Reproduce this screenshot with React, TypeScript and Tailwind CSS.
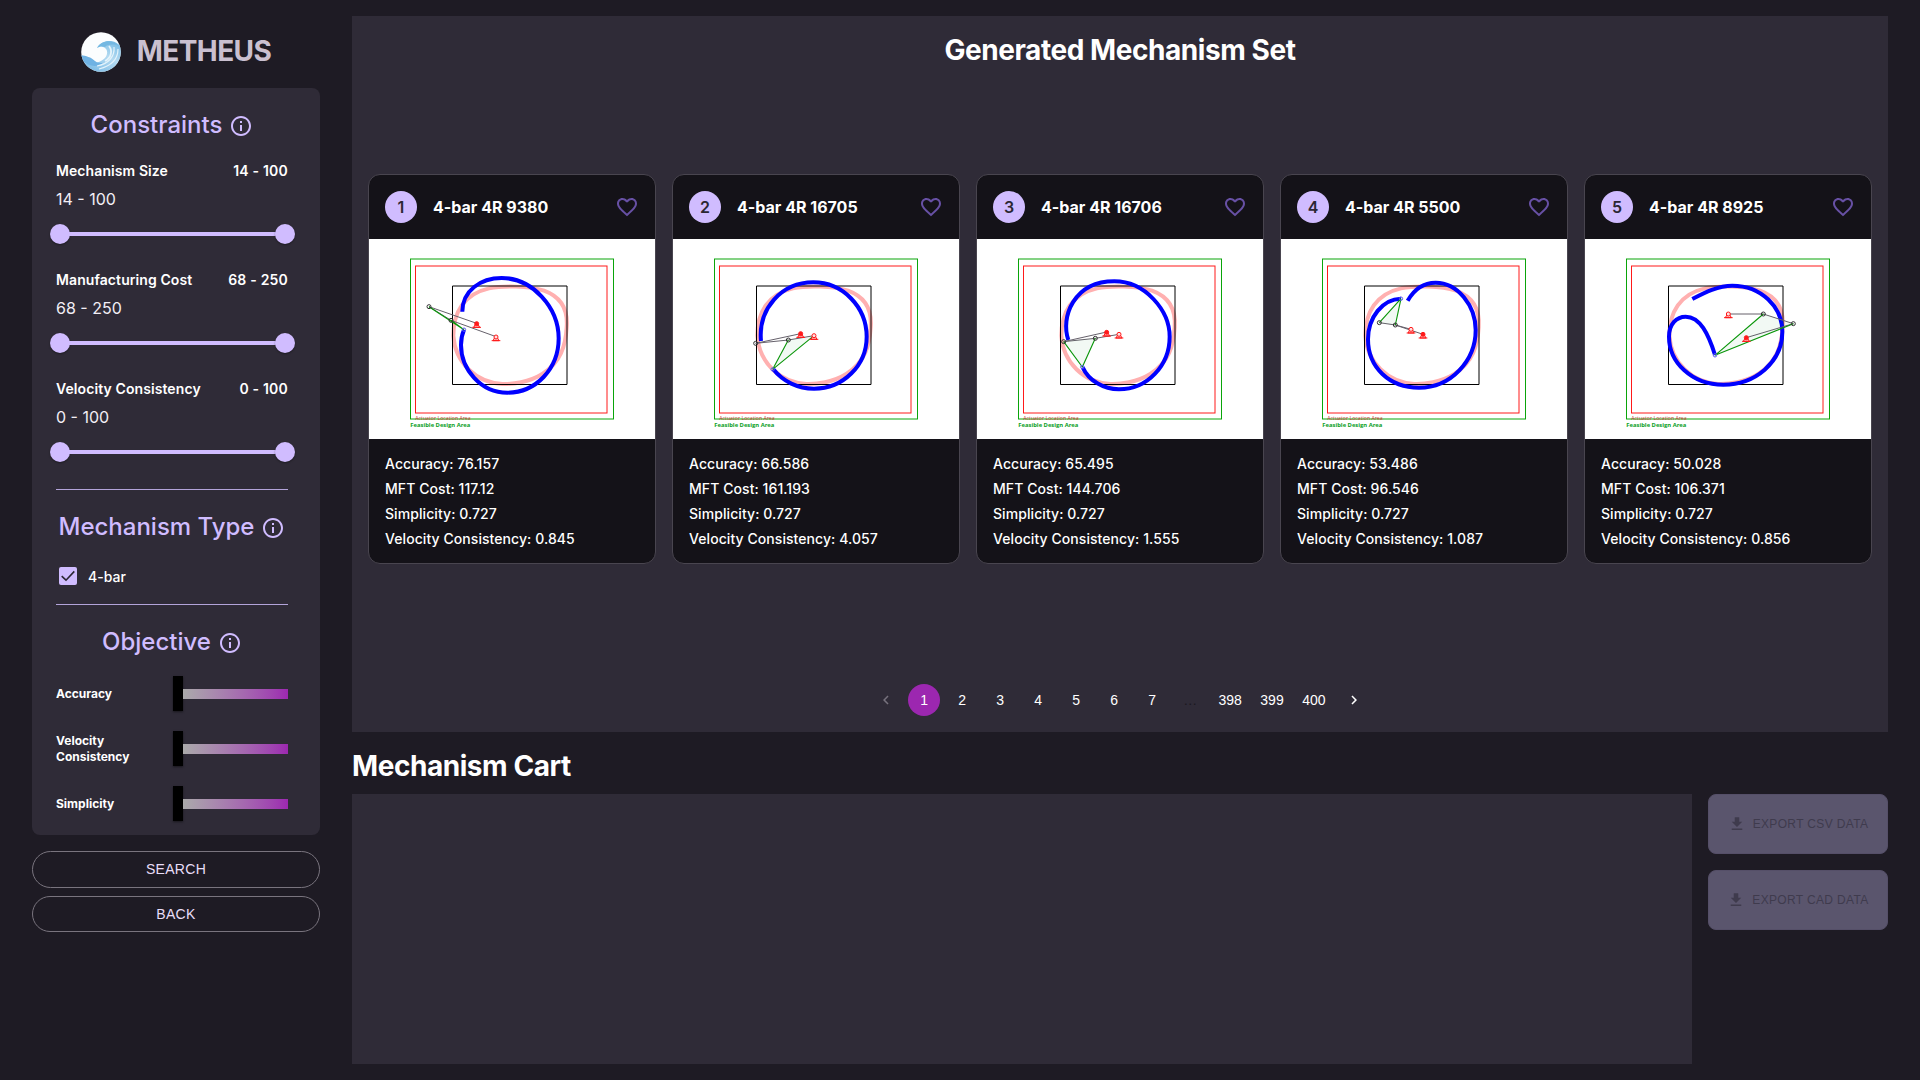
import React from 'react';

type Pt = [number, number];

interface Mechanism {
  id: string;
  accuracy: string;
  cost: string;
  simplicity: string;
  velocity: string;
  curve: string;
  bars: [Pt, Pt][];
  coupler: Pt[];
  joints: Pt[];
  pen: Pt;
  motor: Pt;
  pivot: Pt;
}

const mechanisms: Mechanism[] = [
  {
    id: '9380', accuracy: '76.157', cost: '117.12', simplicity: '0.727', velocity: '0.845',
    curve: 'M280 218 C280 155 335 117 398 117 C490 117 569 205 569 298 C569 390 500 461 415 461 C335 461 276 390 276 318 C276 300 279 286 285 272',
    bars: [[[180, 203], [323, 253]], [[180, 203], [246, 244]], [[246, 244], [381, 293]]],
    coupler: [[180, 203], [246, 244], [285, 272]],
    joints: [[180, 203], [246, 244]], pen: [285, 272], motor: [323, 254], pivot: [381, 294],
  },
  {
    id: '16705', accuracy: '66.586', cost: '161.193', simplicity: '0.727', velocity: '4.057',
    curve: 'M264 306 C255 210 325 130 421 130 C510 130 581 205 581 293 C581 380 510 449 423 449 C375 449 330 428 301 391',
    bars: [[[248, 313], [383, 284]], [[248, 313], [346, 303]], [[346, 303], [423, 290]]],
    coupler: [[346, 303], [299, 391], [423, 290]],
    joints: [[248, 313], [346, 303]], pen: [299, 391], motor: [383, 284], pivot: [423, 290],
  },
  {
    id: '16706', accuracy: '65.495', cost: '144.706', simplicity: '0.727', velocity: '1.555',
    curve: 'M274 303 C250 235 290 127 412 127 C505 127 578 215 578 293 C578 380 510 451 426 451 C380 451 335 425 317 385',
    bars: [[[260, 308], [389, 279]], [[260, 308], [355, 298]], [[355, 298], [426, 286]]],
    coupler: [[260, 308], [316, 384], [355, 298]],
    joints: [[260, 308], [355, 298]], pen: [316, 384], motor: [389, 280], pivot: [426, 286],
  },
  {
    id: '5500', accuracy: '53.486', cost: '96.546', simplicity: '0.727', velocity: '1.087',
    curve: 'M380 185 C400 150 430 131 464 131 C530 131 584 200 584 273 C584 365 510 446 414 446 C325 446 261 385 261 301 C261 235 305 180 360 179',
    bars: [[[295, 251], [343, 258]], [[343, 258], [426, 286]], [[343, 258], [390, 271]]],
    coupler: [[295, 251], [360, 179], [343, 258]],
    joints: [[295, 251], [343, 258]], pen: [360, 179], motor: [426, 286], pivot: [390, 271],
  },
  {
    id: '8925', accuracy: '50.028', cost: '106.371', simplicity: '0.727', velocity: '0.856',
    curve: 'M322 180 C360 160 400 140 442 140 C530 140 592 205 592 278 C592 370 510 437 415 437 C320 437 252 370 252 293 C252 255 275 233 302 233 C345 233 370 285 390 348',
    bars: [[[430, 225], [535, 225]], [[535, 225], [625, 254]], [[484, 296], [625, 254]]],
    coupler: [[535, 225], [390, 349], [625, 254]],
    joints: [[535, 225], [625, 254]], pen: [390, 349], motor: [484, 296], pivot: [430, 225],
  },
];

function Ground({ at, filled }: { at: Pt; filled?: boolean }) {
  const [x, y] = at;
  return (
    <g stroke="#ff1a1a" strokeWidth="3">
      <path d={`M${x - 4} ${y + 2} L${x - 9} ${y + 11} H${x + 9} L${x + 4} ${y + 2}`} fill="#ffd0d0" />
      <path d={`M${x - 13} ${y + 11} H${x + 13}`} />
      <circle cx={x} cy={y} r="6" fill={filled ? '#ff1a1a' : '#ffe0e0'} />
    </g>
  );
}

function Plot({ m }: { m: Mechanism }) {
  return (
    <svg viewBox="0 0 858 600" className="block h-[200px] w-full bg-white" fill="none">
      <path d="M253 290 C253 220 285 165 360 148 C400 140 480 140 525 155 C580 175 597 215 593 265 C590 320 575 370 520 405 C480 430 430 436 400 435 C320 430 258 370 253 290Z" stroke="#ffb0b0" strokeWidth="12" />
      <path d="M250.5 141 V436.5 H594 V141 Z" stroke="#000" strokeWidth="3" />
      <rect x="139.5" y="81" width="574.5" height="441" stroke="#ff1a1a" strokeWidth="3" />
      <rect x="124.5" y="60" width="609" height="480" stroke="#0aa50a" strokeWidth="3" />
      <text x="139" y="543" textLength="166" lengthAdjust="spacingAndGlyphs" fill="#c0392b" className="font-['Open_Sans'] text-[15px] font-medium">Actuator Location Area</text>
      <text x="124" y="564" textLength="180" lengthAdjust="spacingAndGlyphs" fill="#0aa01e" className="font-['Open_Sans'] text-[18px] font-bold">Feasible Design Area</text>
      <path d={m.curve} stroke="#0000ff" strokeWidth="12" />
      {m.bars.map(([a, b], i) => (
        <path key={i} d={`M${a[0]} ${a[1]} L${b[0]} ${b[1]}`} stroke="#66616b" strokeWidth="3" />
      ))}
      <polygon points={m.coupler.map((p) => p.join(',')).join(' ')} fill="#008c1e" fillOpacity="0.05" />
      <path
        d={m.coupler
          .filter((p) => p[0] !== m.pen[0])
          .map((p) => `M${p[0]} ${p[1]} L${m.pen[0]} ${m.pen[1]}`)
          .join(' ')}
        stroke="#0a960a"
        strokeWidth="3.4"
      />
      {m.joints.map(([x, y], i) => (
        <circle key={i} cx={x} cy={y} r="6" stroke="#333" strokeWidth="3" />
      ))}
      <circle cx={m.pen[0]} cy={m.pen[1]} r="5" stroke="#5a5af0" strokeWidth="3" />
      <Ground at={m.pivot} />
      <Ground at={m.motor} filled />
    </svg>
  );
}

function Card({ m, index }: { m: Mechanism; index: number }) {
  return (
    <article className="w-72 overflow-hidden rounded-xl border border-[#49454f] bg-[#141218]">
      <header className="flex h-16 items-center px-4">
        <span className="flex size-8 items-center justify-center rounded-full bg-[#d0bcff] text-base font-semibold text-[#2b2733]">{index}</span>
        <h2 className="ml-4 flex-1 text-base font-bold text-white">4-bar 4R {m.id}</h2>
        <svg viewBox="0 0 24 24" className="size-6 fill-[#6750a4]">
          <path d="M16.5 3c-1.74 0-3.41.81-4.5 2.09C10.91 3.81 9.24 3 7.5 3 4.42 3 2 5.42 2 8.5c0 3.78 3.4 6.86 8.55 11.54L12 21.35l1.45-1.32C18.6 15.36 22 12.28 22 8.5 22 5.42 19.58 3 16.5 3zm-4.4 15.55l-.1.1-.1-.1C7.14 14.24 4 11.39 4 8.5 4 6.5 5.5 5 7.5 5c1.54 0 3.04.99 3.57 2.36h1.87C13.46 5.99 14.96 5 16.5 5c2 0 3.5 1.5 3.5 3.5 0 2.89-3.14 5.74-7.9 10.05z" />
        </svg>
      </header>
      <Plot m={m} />
      <div className="px-4 py-3 text-sm leading-[25px] font-medium tracking-[0.07px] text-white">
        <p>Accuracy: {m.accuracy}</p>
        <p>MFT Cost: {m.cost}</p>
        <p>Simplicity: {m.simplicity}</p>
        <p>Velocity Consistency: {m.velocity}</p>
      </div>
    </article>
  );
}

function SectionTitle({ children }: { children: string }) {
  return (
    <h2 className="flex h-8 items-center justify-center text-2xl font-medium text-[#d0bcff]">
      <span className="mt-0.5">{children}</span>
      <svg viewBox="0 0 24 24" className="mt-1 ml-[7px] size-6 fill-[#d0bcff]">
        <path d="M11 7h2v2h-2zm0 4h2v6h-2zm1-9C6.48 2 2 6.48 2 12s4.48 10 10 10 10-4.48 10-10S17.52 2 12 2zm0 18c-4.41 0-8-3.59-8-8s3.59-8 8-8 8 3.59 8 8-3.59 8-8 8z" />
      </svg>
    </h2>
  );
}

function RangeField({ label, range }: { label: string; range: string }) {
  return (
    <div className="h-[109px]">
      <div className="flex h-5 items-center justify-between text-sm font-semibold text-white">
        <span className="tracking-[0.09px]">{label}</span>
        <span className="tracking-[0.2px]">{range}</span>
      </div>
      <p className="mt-1.5 h-6 text-base leading-6 text-[#f2eef5]">{range}</p>
      <div className="mt-[13px] -mr-[7px] -ml-1.5 flex items-center">
        <span className="size-5 rounded-full bg-[#d0bcff] shadow-[0_1px_2px_rgba(0,0,0,0.4)]" />
        <span className="-mx-1 h-1 flex-1 bg-[#d0bcff]" />
        <span className="size-5 rounded-full bg-[#d0bcff] shadow-[0_1px_2px_rgba(0,0,0,0.4)]" />
      </div>
    </div>
  );
}

function ObjectiveSlider({ label }: { label: string }) {
  return (
    <div className="flex h-[55px] items-center">
      <span className="w-[117px] pr-8 text-xs leading-4 font-bold text-white">{label}</span>
      <span className="h-[35px] w-2.5 bg-black shadow-[0_1px_2px_rgba(0,0,0,0.5)]" />
      <span className="h-2.5 flex-1 bg-linear-to-r from-[#aaaaaa] to-[#9c27b0]" />
    </div>
  );
}

function ExportButton({ children }: { children: string }) {
  return (
    <button className="flex h-[60px] w-[180px] items-center justify-center rounded-lg border border-[#554f68] bg-[#5a556d] font-['Liberation_Sans'] text-xs tracking-[0.35px] text-[#3f3b4d]">
      <svg viewBox="0 0 24 24" className="mr-[7px] size-[18px] fill-[#3f3b4d]">
        <path d="M19 9h-4V3H9v6H5l7 7 7-7zM5 18v2h14v-2H5z" />
      </svg>
      {children}
    </button>
  );
}

function Logo() {
  return (
    <svg viewBox="0 0 40 40" className="size-10">
      <defs>
        <clipPath id="disc"><circle cx="20" cy="20" r="19.8" /></clipPath>
        <linearGradient id="wave" x1="1" y1="0" x2="0.3" y2="1">
          <stop offset="0" stopColor="#6fb8e4" />
          <stop offset="0.5" stopColor="#b4daf1" />
          <stop offset="1" stopColor="#7fbde6" />
        </linearGradient>
      </defs>
      <g clipPath="url(#disc)">
        <rect width="40" height="40" fill="#fbfdfe" />
        <path d="M16 16 C20 8 32 7 37 12 L40 14 V40 H4 L2 31 C10 33 19 31 24 26 C28 21 26 16 22 15 C19 14 17 15 16 16Z" fill="url(#wave)" />
        <path d="M16 16 C20 8 32 7 38 14 C33 12 27 12 24 15 C21 14 18 14.500 16 16Z" fill="#74b8e2" />
        <path d="M0 23 C5 24 10 25 14 29 C16 31 20 31 22 31 C17 36 6 34 1 29Z" fill="#6fb2e3" />
        <path d="M37 17 C37 27 30 34 18 37 M33 15 C34 25 27 32 16 34" stroke="#e4f3fb" strokeWidth="1.2" fill="none" />
        <path d="M28 14 C32 19 30 26 24 29" stroke="#e6f4fb" strokeWidth="1.8" fill="none" />
      </g>
    </svg>
  );
}

const pages = ['1', '2', '3', '4', '5', '6', '7', '…', '398', '399', '400'];

function Chevron({ d, className }: { d: string; className: string }) {
  return (
    <span className="mx-[3px] flex size-8 items-center justify-center">
      <svg viewBox="0 0 24 24" className={className}><path d={d} /></svg>
    </span>
  );
}

function Pagination() {
  return (
    <nav className="flex h-8 items-center justify-center font-['Liberation_Sans'] text-sm text-white">
      <Chevron d="M15.41 7.41L14 6l-6 6 6 6 1.41-1.41L10.83 12z" className="size-[18px] fill-[#77727d]" />
      {pages.map((p) => {
        if (p === '1') return <span key={p} className="mx-[3px] flex size-8 items-center justify-center rounded-full bg-[#9c27b0]">{p}</span>;
        if (p === '…') return <span key={p} className="mx-[3px] w-8 text-center text-[#1b1820]">{p}</span>;
        return <span key={p} className="mx-[3px] min-w-8 px-[6.25px] text-center">{p}</span>;
      })}
      <Chevron d="M10 6L8.59 7.41 13.17 12l-4.58 4.59L10 18l6-6z" className="size-[18px] fill-white" />
    </nav>
  );
}

export default function App() {
  return (
    <div className="flex h-[1080px] w-[1920px] overflow-hidden bg-[#1e1b24] font-['Inter',sans-serif]">
      <aside className="ml-8 w-72">
        <div className="mt-8 flex h-10 items-center justify-center gap-4">
          <Logo />
          <span className="mb-0.5 text-[28px] leading-[38px] font-bold tracking-[-0.6px] text-[#cac0d0]">METHEUS</span>
        </div>
        <section className="mt-4 h-[747px] rounded-lg bg-[#2f2b37] pt-5 pr-8 pl-6">
          <SectionTitle>Constraints</SectionTitle>
          <div className="mt-[21px]">
            <RangeField label="Mechanism Size" range="14 - 100" />
            <RangeField label="Manufacturing Cost" range="68 - 250" />
            <RangeField label="Velocity Consistency" range="0 - 100" />
          </div>
          <div className="mt-[1px] h-px bg-[#b3a4da]" />
          <div className="mt-5"><SectionTitle>Mechanism Type</SectionTitle></div>
          <label className="mt-[25px] ml-[3px] flex h-[18px] items-center text-sm font-medium text-white">
            <svg viewBox="0 0 18 18" className="mr-[11px] size-[18px]">
              <rect width="18" height="18" rx="2" fill="#d0bcff" />
              <path d="M2.7 9.2 L7 13.2 L15.3 4.4" fill="none" stroke="#2b2733" strokeWidth="1.6" />
            </svg>
            <span className="mt-0.5">4-bar</span>
          </label>
          <div className="mt-[19px] h-px bg-[#b3a4da]" />
          <div className="mt-5"><SectionTitle>Objective</SectionTitle></div>
          <div className="mt-[9px]">
            <ObjectiveSlider label="Accuracy" />
            <ObjectiveSlider label="Velocity Consistency" />
            <ObjectiveSlider label="Simplicity" />
          </div>
        </section>
        <div className="mt-4 flex flex-col gap-2 font-['Liberation_Sans'] text-sm text-[#e8def8]">
          <button className="h-[36.5px] rounded-full border border-[#79747e] tracking-[0.3px]">SEARCH</button>
          <button className="h-[36.5px] rounded-full border border-[#79747e] tracking-[0.3px]">BACK</button>
        </div>
      </aside>
      <main className="ml-8 w-[1536px]">
        <section className="mt-4 flex h-[716px] flex-col bg-[#2f2b37] p-4">
          <h1 className="h-9 text-center text-[28px] leading-9 font-bold tracking-[-0.44px] text-white">Generated Mechanism Set</h1>
          <div className="mt-[106px] flex gap-4">
            {mechanisms.map((m, i) => (
              <Card key={m.id} m={m} index={i + 1} />
            ))}
          </div>
          <div className="mt-auto"><Pagination /></div>
        </section>
        <h1 className="mt-4 h-9 text-[28px] leading-9 font-bold tracking-[-0.44px] text-white">Mechanism Cart</h1>
        <div className="mt-2.5 flex gap-4">
          <section className="h-[270px] w-[1340px] bg-[#2f2b37]" />
          <div className="flex flex-col gap-4">
            <ExportButton>EXPORT CSV DATA</ExportButton>
            <ExportButton>EXPORT CAD DATA</ExportButton>
          </div>
        </div>
      </main>
    </div>
  );
}
